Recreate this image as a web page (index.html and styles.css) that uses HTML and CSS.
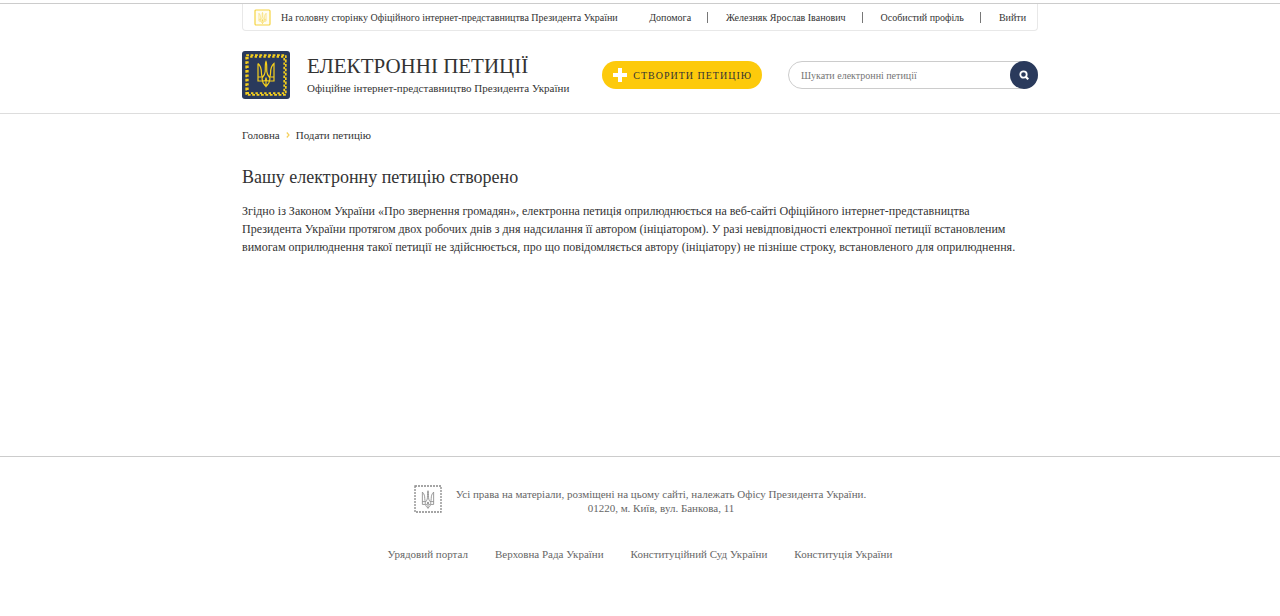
FILE: index.html
```
<!DOCTYPE html>
<html lang="uk">
<head>
<meta charset="UTF-8">
<meta name="viewport" content="width=device-width, initial-scale=1.0">
<title>Електронні петиції</title>
<link rel="stylesheet" href="styles.css">
</head>
<body>

<!-- Shared trident shape -->
<svg class="sprite" aria-hidden="true">
  <symbol id="trident" viewBox="0 0 18 27">
    <path d="M9 1C8 3 8.4 7 8.2 11C8 14 6.8 15.5 5.4 17C4.6 18.4 5.2 20.5 7 20.5C8.4 20.5 9 19 9 17C9 19 9.6 20.5 11 20.5C12.8 20.5 13.4 18.4 12.6 17C11.2 15.5 10 14 9.8 11C9.6 7 10 3 9 1Z M1 3V20.5H5.5C5.8 23.5 7.8 24 9 26C10.2 24 12.2 23.5 12.5 20.5H17V3C14.2 5.5 13.6 9 13.6 12C13.6 14 13.2 15.5 12.6 17 M1 3C3.8 5.5 4.4 9 4.4 12C4.4 14 4.8 15.5 5.4 17 M1 16.5H5 M13 16.5H17 M9 17V26" fill="none" stroke="currentColor" stroke-width="1.2"/>
  </symbol>
</svg>

<header class="header">
  <div class="container">
    <div class="topbar">
      <a href="#" class="topbar-home">
        <svg class="topbar-icon" viewBox="0 0 17 17" aria-hidden="true">
          <rect x="1" y="1" width="15" height="15" rx="1" fill="#fffdf2" stroke="#f5d442" stroke-width="1.2"/>
          <use href="#trident" x="4" y="3" width="9" height="12"/>
        </svg>
        На головну сторінку Офіційного інтернет-представництва Президента України
      </a>
      <nav class="topbar-nav">
        <a href="#">Допомога</a>
        <a href="#">Железняк Ярослав Іванович</a>
        <a href="#">Особистий профіль</a>
        <a href="#">Вийти</a>
      </nav>
    </div>

    <div class="masthead">
      <a href="#" class="brand">
        <svg class="brand-logo" viewBox="0 0 48 48" aria-hidden="true">
          <rect width="48" height="48" rx="3" fill="#2a3a5c"/>
          <!-- Rope border: two dashed lines out of step -->
          <rect x="4.2" y="4.2" width="39.6" height="39.6" fill="none" stroke="#f5cf1d" stroke-width="1.7" stroke-dasharray="2.8 1.6"/>
          <rect x="5.8" y="5.8" width="36.4" height="36.4" fill="none" stroke="#f5cf1d" stroke-width="1.7" stroke-dasharray="2.4 2" stroke-dashoffset="2"/>
          <use href="#trident" x="15" y="9" width="18" height="28"/>
        </svg>
        <span class="brand-text">
          <span class="brand-title">ЕЛЕКТРОННІ ПЕТИЦІЇ</span>
          <span class="brand-subtitle">Офіційне інтернет-представництво Президента України</span>
        </span>
      </a>
      <button type="button" class="create-button">
        <svg class="create-icon" viewBox="0 0 14 14" aria-hidden="true">
          <path d="M7 0V14M0 7H14" stroke="#fff" stroke-width="4"/>
        </svg>
        СТВОРИТИ ПЕТИЦІЮ
      </button>
      <form class="search">
        <input type="search" class="search-input" placeholder="Шукати електронні петиції" aria-label="Шукати електронні петиції">
        <button type="submit" class="search-button" aria-label="Шукати">
          <svg class="search-icon" viewBox="0 0 10 10" aria-hidden="true">
            <circle cx="4.5" cy="4.5" r="3.2" fill="none" stroke="#fff" stroke-width="1.8"/>
            <path d="M6.5 6.5L9.3 9.3" stroke="#fff" stroke-width="2.2"/>
          </svg>
        </button>
      </form>
    </div>
  </div>
</header>

<main class="main">
  <div class="container">
    <nav class="breadcrumbs">
      <a href="#">Головна</a>
      <svg class="breadcrumbs-arrow" viewBox="0 0 4 6" aria-hidden="true">
        <path d="M0.8 0.5L3 3L0.8 5.5" fill="none" stroke="#f5cf5a" stroke-width="1.2"/>
      </svg>
      <a href="#">Подати петицію</a>
    </nav>
    <h1 class="title">Вашу електронну петицію створено</h1>
    <p class="message">
      Згідно із Законом України «Про звернення громадян», електронна петиція оприлюднюється на веб-сайті Офіційного інтернет-представництва<br>
      Президента України протягом двох робочих днів з дня надсилання її автором (ініціатором). У разі невідповідності електронної петиції встановленим<br>
      вимогам оприлюднення такої петиції не здійснюється, про що повідомляється автору (ініціатору) не пізніше строку, встановленого для оприлюднення.
    </p>
  </div>
</main>

<footer class="footer">
  <div class="copyright">
    <svg class="copyright-logo" viewBox="0 0 28 28" aria-hidden="true">
      <rect x="1" y="1" width="26" height="26" fill="none" stroke="#888" stroke-width="1.3" stroke-dasharray="2 1"/>
      <use href="#trident" x="7" y="5" width="14" height="19"/>
    </svg>
    <p class="copyright-text">
      Усі права на матеріали, розміщені на цьому сайті, належать Офісу Президента України.<br>
      <span class="address">01220, м. Київ, вул. Банкова, 11</span>
    </p>
  </div>
  <nav class="footer-nav">
    <a href="#">Урядовий портал</a>
    <a href="#">Верховна Рада України</a>
    <a href="#">Конституційний Суд України</a>
    <a href="#">Конституція України</a>
  </nav>
</footer>

</body>
</html>
```
FILE: styles.css
```
* {
  box-sizing: border-box;
}
body {
  display: flex;
  flex-direction: column;
  min-height: 100vh;
  margin: 0;
  padding-top: 3px;
  font-family: "Liberation Serif", serif;
  font-size: 11px;
  color: #333;
  background-color: #fff;
}
a {
  color: inherit;
  text-decoration: none;
}
a:hover {
  text-decoration: underline;
}
button {
  border: 0;
  font-family: inherit;
  cursor: pointer;
}
.sprite {
  display: none;
}
.container {
  width: 100%;
  max-width: 796px;
  margin: 0 auto;
}

/* Header */
.header {
  border-top: 1px solid #ccc;
  border-bottom: 1px solid #ddd;
}
.topbar {
  display: flex;
  align-items: center;
  justify-content: space-between;
  height: 27px;
  padding: 0 11px;
  border: 1px solid #e8e8e8;
  border-top: 0;
  border-radius: 0 0 4px 4px;
  font-size: 10px;
}
.topbar-home {
  display: flex;
  align-items: center;
  gap: 10px;
}
.topbar-icon {
  width: 17px;
  height: 17px;
  color: #f5d442;
}
.topbar-nav {
  display: flex;
}
.topbar-nav a + a {
  margin-left: 16px;
  padding-left: 18px;
  border-left: 1px solid #777;
}
.masthead {
  display: flex;
  align-items: center;
  height: 82px;
  padding: 11px 0 5px;
}
.brand {
  display: flex;
  align-items: center;
  gap: 17px;
}
.brand-logo {
  width: 48px;
  height: 48px;
  color: #f5cf1d;
}
.brand-text {
  display: flex;
  flex-direction: column;
}
.brand-title {
  font-size: 21px;
  line-height: 26px;
}
.brand-subtitle {
  line-height: 18px;
}
.create-button {
  display: flex;
  align-items: center;
  gap: 6px;
  height: 28px;
  margin-left: auto;
  padding: 0 10px 0 11px;
  border-radius: 14px;
  background-color: #fdca0b;
  color: #333;
  font-size: 10px;
  letter-spacing: 1px;
}
.create-icon {
  width: 14px;
  height: 14px;
}
.search {
  display: flex;
  width: 250px;
  height: 28px;
  margin-left: 26px;
  border: 1px solid #ccc;
  border-radius: 14px;
}
.search-input {
  flex: 1;
  min-width: 0;
  padding: 0 12px;
  border: 0;
  background: none;
  font-family: inherit;
  font-size: 10px;
  outline: none;
}
.search-input::placeholder {
  color: #757575;
}
.search-button {
  display: flex;
  align-items: center;
  justify-content: center;
  width: 28px;
  height: 28px;
  margin: -1px;
  padding: 0;
  border-radius: 50%;
  background-color: #2a3a5c;
}
.search-icon {
  width: 10px;
  height: 10px;
}

/* Content */
.main {
  flex: 1;
}
.breadcrumbs {
  display: flex;
  align-items: center;
  gap: 6px;
  padding-top: 13px;
  line-height: 16px;
}
.breadcrumbs-arrow {
  width: 4px;
  height: 6px;
}
.title {
  margin: 22px 0 13px;
  font-size: 18px;
  font-weight: normal;
  line-height: 24px;
}
.message {
  margin: 0;
  font-size: 12px;
  line-height: 18px;
  white-space: nowrap;
}

/* Footer */
.footer {
  padding: 28px 0 54px;
  border-top: 1px solid #ccc;
  color: #666;
}
.copyright {
  display: flex;
  align-items: flex-start;
  justify-content: center;
  gap: 14px;
}
.copyright-logo {
  width: 28px;
  height: 28px;
  color: #888;
}
.copyright-text {
  margin: 0;
  padding-top: 2px;
  line-height: 14px;
  text-align: center;
}
.address {
  font-family: Georgia, "Liberation Serif", serif;
  font-variant-numeric: oldstyle-nums;
}
.footer-nav {
  display: flex;
  justify-content: center;
  gap: 27px;
  margin-top: 31px;
  line-height: 16px;
}
```
